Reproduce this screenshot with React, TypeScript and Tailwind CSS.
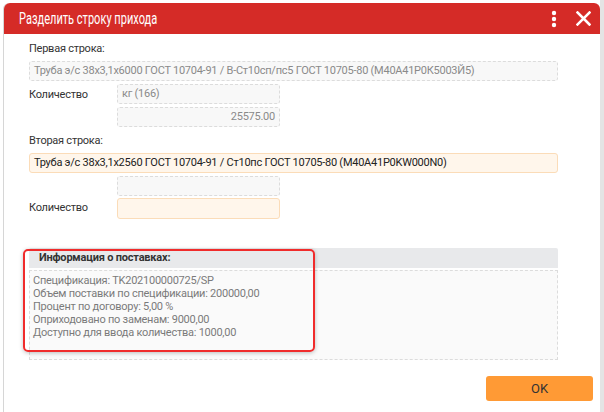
import React from "react";

const font = { fontFamily: "Roboto, 'Liberation Sans', sans-serif" };

function Label({ children, className = "" }: { children: React.ReactNode; className?: string }) {
  return <div className={`text-[11px] tracking-[-0.25px] text-[#333] ${className}`}>{children}</div>;
}

export default function App() {
  return (
    <div className="w-[604px] h-[412px] bg-white relative overflow-hidden" style={font}>
      <div className="absolute right-0 top-0 w-[4px] h-full bg-[#e4e4e4]" />
      <div className="absolute left-[3px] top-[3px] w-[597px] h-[409px] bg-white border-l border-[#d6d6d6] rounded-tl-[6px] rounded-tr-[6px] flex flex-col">
        <div className="h-[31px] bg-[#d52b27] rounded-t-[6px] flex items-center pl-[15px] pr-[9px] shrink-0">
          <div className="flex-1 min-w-0">
            <div className="w-max text-white text-[16px] leading-[20px] whitespace-nowrap origin-left [transform:scaleX(0.69)]">Разделить строку прихода</div>
          </div>
          <svg width="6" height="18" viewBox="0 0 6 18" className="mr-[19px]">
            <circle cx="3" cy="3" r="2.2" fill="white" />
            <circle cx="3" cy="9" r="2.2" fill="white" />
            <circle cx="3" cy="15" r="2.2" fill="white" />
          </svg>
          <svg width="15" height="15" viewBox="0 0 15 15">
            <path d="M1.5 1.5 L13.5 13.5 M13.5 1.5 L1.5 13.5" stroke="white" strokeWidth="2.5" strokeLinecap="square" />
          </svg>
        </div>
        <div className="pl-[25px] pr-[42px] pt-[8px] flex flex-col">
          <Label className="h-[13px] leading-[13px]">Первая строка:</Label>
          <div className="mt-[6px] h-[20px] border border-dashed border-[#dcdcdc] rounded-[3px] bg-[#f8f8f8] flex items-center px-[4px] text-[11px] tracking-[-0.25px] text-[#8a8a8a] whitespace-nowrap overflow-hidden">
            Труба э/с 38x3,1x6000 ГОСТ 10704-91 / В-Ст10сп/пс5 ГОСТ 10705-80 (М40А41Р0К5003Й5)
          </div>
          <div className="flex mt-[3px]">
            <Label className="w-[88px] pt-[3px]">Количество</Label>
            <div className="flex flex-col gap-[3px]">
              <div className="w-[163px] h-[20px] border border-dashed border-[#dcdcdc] rounded-[3px] bg-[#f8f8f8] flex items-center px-[4px] text-[11px] tracking-[-0.25px] text-[#8a8a8a]">кг (166)</div>
              <div className="w-[163px] h-[20px] border border-dashed border-[#dcdcdc] rounded-[3px] bg-[#f8f8f8] flex items-center justify-end px-[4px] text-[11px] tracking-[-0.25px] text-[#8a8a8a]">25575.00</div>
            </div>
          </div>
          <Label className="mt-[7px] h-[13px] leading-[13px]">Вторая строка:</Label>
          <div className="mt-[6px] h-[20px] border border-[#fbdcb8] rounded-[3px] bg-[#fff6eb] flex items-center px-[4px] text-[11px] tracking-[-0.25px] text-[#222] whitespace-nowrap overflow-hidden">
            Труба э/с 38x3,1x2560 ГОСТ 10704-91 / Ст10пс ГОСТ 10705-80 (М40А41Р0KW000N0)
          </div>
          <div className="ml-[88px] mt-[3px] w-[163px] h-[20px] border border-dashed border-[#dcdcdc] rounded-[3px] bg-[#f8f8f8]" />
          <div className="flex mt-[2px] items-center">
            <Label className="w-[88px]">Количество</Label>
            <div className="w-[163px] h-[21px] border border-[#fbdcb8] rounded-[3px] bg-[#fff6eb]" />
          </div>
          <div className="relative mt-[29px]">
            <div className="h-[20px] bg-[#e8e9eb] rounded-t-[2px] flex items-center pl-[10px] text-[11px] tracking-[-0.2px] font-bold text-[#333]">Информация о поставках:</div>
            <div className="mt-[2px] h-[90px] border border-dashed border-[#dcdcdc] bg-[#fafafa] px-[3px] pt-[3px] text-[11px] tracking-[-0.25px] leading-[13px] text-[#7a7a7a]">
              <div>Спецификация: TK202100000725/SP</div>
              <div>Объем поставки по спецификации: 200000,00</div>
              <div>Процент по договору: 5,00 %</div>
              <div>Оприходовано по заменам: 9000,00</div>
              <div>Доступно для ввода количества: 1000,00</div>
            </div>
            <div className="absolute left-[-6px] top-[1px] w-[292px] h-[103px] border-2 border-[#f02b2b] rounded-[5px] shadow-[0_1px_4px_rgba(0,0,0,0.25)]" />
          </div>
        </div>
        <div className="flex justify-end pr-[7px] mt-[16px]">
          <button className="w-[107px] h-[25px] bg-[#ff9a35] rounded-[3px] text-[13px] text-[#333]">OK</button>
        </div>
      </div>
    </div>
  );
}
